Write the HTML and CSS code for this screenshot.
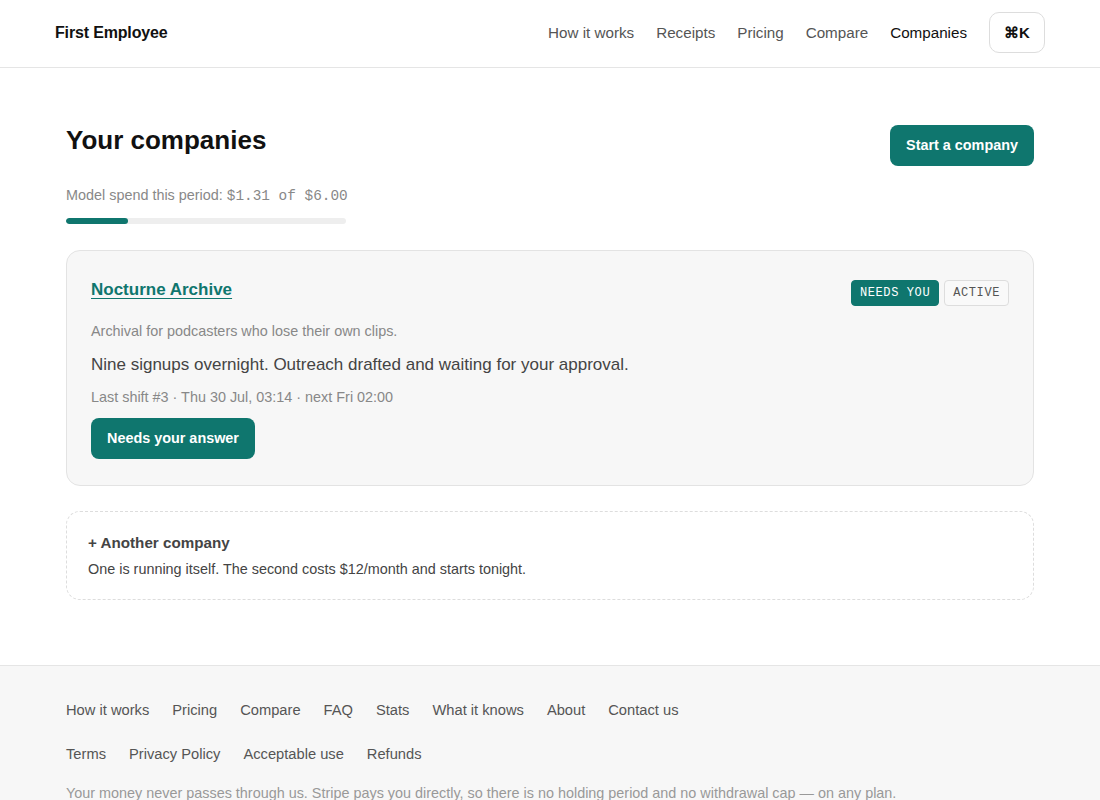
FILE: index.html
```html
<!DOCTYPE html>
<html>

<head>
    <title>Your companies · First Employee</title>
    <meta charset="UTF-8">
    <link rel="stylesheet" href="styles.css">
</head>

<body>
    <header class="site-header">
        <a class="logo" href="#">First Employee</a>
        <nav class="top-nav">
            <a href="#">How it works</a>
            <a href="#">Receipts</a>
            <a href="#">Pricing</a>
            <a href="#">Compare</a>
            <a href="#" class="current">Companies</a>
            <button class="cmdk">⌘K</button>
        </nav>
    </header>

    <main class="container">
        <div class="page-head">
            <h1>Your companies</h1>
            <a class="btn" href="#">Start a company</a>
        </div>

        <p class="spend">Model spend this period: <span class="mono">$1.31 of $6.00</span></p>
        <div class="meter"><div class="meter-fill" style="width: 22%"></div></div>

        <section class="company-card">
            <div class="card-top">
                <a class="company-name" href="#">Nocturne Archive</a>
                <div class="badges">
                    <span class="badge badge-needs">NEEDS YOU</span>
                    <span class="badge badge-active">ACTIVE</span>
                </div>
            </div>
            <p class="tagline">Archival for podcasters who lose their own clips.</p>
            <p class="summary">Nine signups overnight. Outreach drafted and waiting for your approval.</p>
            <p class="shift">Last shift #3 · Thu 30 Jul, 03:14 · next Fri 02:00</p>
            <a class="btn" href="#">Needs your answer</a>
        </section>

        <section class="add-card">
            <h3>+ Another company</h3>
            <p>One is running itself. The second costs $12/month and starts tonight.</p>
        </section>
    </main>

    <footer class="site-footer">
        <div class="container">
            <nav class="foot-links">
                <a href="#">How it works</a>
                <a href="#">Pricing</a>
                <a href="#">Compare</a>
                <a href="#">FAQ</a>
                <a href="#">Stats</a>
                <a href="#">What it knows</a>
                <a href="#">About</a>
                <a href="#">Contact us</a>
            </nav>
            <nav class="foot-links legal">
                <a href="#">Terms</a>
                <a href="#">Privacy Policy</a>
                <a href="#">Acceptable use</a>
                <a href="#">Refunds</a>
            </nav>
            <p class="fine">Your money never passes through us. Stripe pays you directly, so there is no holding period and no withdrawal cap — on any plan.</p>
        </div>
    </footer>
</body>

</html>
```

FILE: styles.css
```css
body {
    margin: 0;
    font-family: "Liberation Sans", Arial, sans-serif;
    color: #111;
    background: #fff;
}

a {
    color: inherit;
    text-decoration: none;
}

p {
    margin: 0;
}

.mono {
    font-family: "Liberation Mono", "Courier New", monospace;
}

.site-header {
    height: 68px;
    box-sizing: border-box;
    padding: 0 55px 2px;
    border-bottom: 1px solid #e5e5e5;
    display: flex;
    align-items: center;
    justify-content: space-between;
}

.logo {
    font-weight: bold;
    font-size: 16px;
    letter-spacing: -0.01em;
}

.top-nav {
    display: flex;
    align-items: center;
    gap: 22px;
    font-size: 15.2px;
    color: #555;
}

.top-nav .current {
    color: #111;
}

.cmdk {
    width: 56px;
    height: 41px;
    border: 1px solid #ddd;
    border-radius: 10px;
    background: #fff;
    font-family: inherit;
    font-weight: bold;
    font-size: 15px;
    color: #111;
}

.container {
    max-width: 1000px;
    margin: 0 auto;
    padding: 0 16px;
    box-sizing: border-box;
}

main.container {
    padding-top: 57px;
    padding-bottom: 65px;
}

.page-head {
    display: flex;
    justify-content: space-between;
    align-items: flex-start;
}

h1 {
    margin: 0;
    font-size: 26px;
    line-height: 31px;
}

.btn {
    display: inline-block;
    background: #0f766e;
    color: #fff;
    font-weight: bold;
    font-size: 14.4px;
    line-height: 17px;
    padding: 12px 16px;
    border-radius: 8px;
}

.spend {
    margin-top: 19px;
    font-size: 14.4px;
    line-height: 21.6px;
    color: #888;
}

.meter {
    margin-top: 10px;
    width: 280px;
    height: 6px;
    border-radius: 3px;
    background: #eee;
    overflow: hidden;
}

.meter-fill {
    height: 100%;
    background: #0f766e;
    border-radius: 3px;
}

.company-card {
    margin-top: 26px;
    background: #f7f7f7;
    border: 1px solid #e3e3e3;
    border-radius: 14px;
    padding: 29px 24px 26px;
}

.card-top {
    display: flex;
    justify-content: space-between;
    align-items: flex-start;
}

.company-name {
    color: #0f766e;
    font-weight: bold;
    font-size: 17px;
    line-height: 20px;
    text-decoration: underline;
    text-underline-offset: 3px;
}

.badges {
    display: flex;
    gap: 5px;
}

.badge {
    font-family: "Liberation Mono", "Courier New", monospace;
    font-size: 12px;
    letter-spacing: 0.05em;
    line-height: 24px;
    padding: 0 8px;
    border-radius: 4px;
    border: 1px solid transparent;
}

.badge-needs {
    background: #0f766e;
    border-color: #0f766e;
    color: #fff;
}

.badge-active {
    background: #f9f9f9;
    border-color: #ddd;
    color: #555;
}

.tagline {
    margin-top: 15px;
    font-size: 14.4px;
    line-height: 21.6px;
    color: #888;
}

.summary {
    margin-top: 10px;
    font-size: 17px;
    line-height: 26px;
    color: #444;
}

.shift {
    margin-top: 9px;
    font-size: 14.4px;
    line-height: 21.6px;
    color: #888;
}

.company-card .btn {
    margin-top: 9px;
}

.add-card {
    margin-top: 25px;
    border: 1px dashed #ddd;
    border-radius: 14px;
    padding: 20px 21px 19px;
}

.add-card h3 {
    margin: 0;
    font-size: 15.2px;
    line-height: 21px;
    color: #444;
}

.add-card p {
    margin-top: 6px;
    font-size: 14.4px;
    line-height: 21.6px;
    color: #444;
}

.site-footer {
    background: #f7f7f7;
    border-top: 1px solid #e5e5e5;
    padding: 33px 0 40px;
}

.foot-links {
    display: flex;
    gap: 23px;
    font-size: 14.7px;
    line-height: 22px;
    color: #555;
}

.foot-links.legal {
    margin-top: 22px;
}

.fine {
    margin-top: 18px;
    font-size: 14.4px;
    line-height: 21.6px;
    color: #999;
}
```
